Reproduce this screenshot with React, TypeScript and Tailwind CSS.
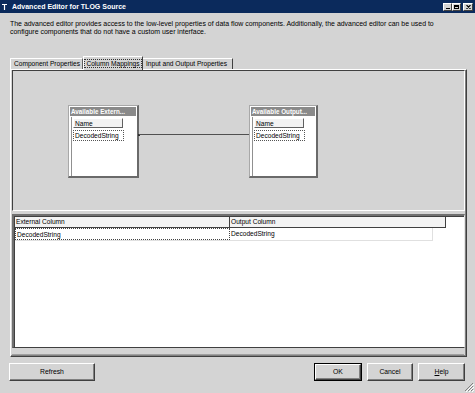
import React from 'react'

const ui = "font-['Liberation_Sans',Arial,sans-serif]"

const Btn = ({ label, w, primary, u }: { label: string; w: string; primary?: boolean; u?: boolean }) => (
  <div className={`${w} h-[18px] ${primary ? 'border border-black' : ''}`}>
    <div className="w-full h-full flex items-center justify-center border-t border-l border-white border-r border-b border-r-[#404040] border-b-[#404040] shadow-[inset_-1px_-1px_0_#808080] text-[6.8px]">
      {u ? (<span><span className="underline">H</span>elp</span>) : label}
    </div>
  </div>
)

const MapBox = ({ title, left, w }: { title: string; left: string; w: string }) => (
  <div className={`absolute top-[34px] ${left} ${w} h-[73px] bg-white border-t border-l border-[#a8a8a8] border-r-2 border-b-2 border-r-[#6a6a6a] border-b-[#6a6a6a] flex flex-col`}>
    <div className="mx-[1px] mt-[1px] h-[9px] bg-[#8a8a8a] text-white font-bold text-[6.3px] leading-[9px] pl-[1px] whitespace-nowrap overflow-hidden">
      {title}
    </div>
    <div className="flex-1 ml-[2px] mt-[1px] border-l border-[#909090] pl-[1px] pt-[1px]">
      <div className="w-[50px] h-[10px] bg-[#f2f2f2] border-r border-b border-[#606060] border-t border-l border-t-white border-l-white text-[6.6px] leading-[9px] pl-[1px]">
        Name
      </div>
      <div className="mt-[2px] w-[51px] h-[11px] border border-dotted border-[#555] text-[6.6px] leading-[9px] pl-[1px]">
        DecodedString
      </div>
    </div>
  </div>
)

export default function App() {
  return (
    <div className={`w-[475px] h-[393px] bg-[#d4d4d4] relative overflow-hidden text-black ${ui}`}>
      {/* title bar */}
      <div className="h-[13px] bg-[#0b2a5c] flex items-center pl-[2px] pr-[2px]">
        <svg width="5" height="6" viewBox="0 0 5 6" className="mr-[5px]">
          <path d="M0 0.5H5M2.5 0.5V6" stroke="white" strokeWidth="1.2" />
        </svg>
        <span className="text-white font-bold text-[7px] leading-[13px]">Advanced Editor for TLOG Source</span>
        <div className="ml-auto flex items-center">
          <div className="w-[9px] h-[8px] bg-[#d4d4d4] border-t border-l border-white border-r border-b border-r-[#404040] border-b-[#404040] flex items-end justify-center pb-[1px]">
            <div className="w-[4px] h-[1px] bg-black" />
          </div>
          <div className="w-[9px] h-[8px] bg-[#d4d4d4] border-t border-l border-white border-r border-b border-r-[#404040] border-b-[#404040] flex items-center justify-center">
            <div className="w-[5px] h-[4px] border border-black border-t-2" />
          </div>
          <div className="ml-[2px] w-[10px] h-[8px] bg-[#d4d4d4] border-t border-l border-white border-r border-b border-r-[#404040] border-b-[#404040] flex items-center justify-center">
            <svg width="5" height="4" viewBox="0 0 5 4">
              <path d="M0.5 0L4.5 4M4.5 0L0.5 4" stroke="black" strokeWidth="1.1" />
            </svg>
          </div>
        </div>
      </div>

      {/* description */}
      <div className="pl-[10px] pt-[7px] text-[6.95px] leading-[8px] h-[23px] whitespace-nowrap">
        <div>The advanced editor provides access to the low-level properties of data flow components. Additionally, the advanced editor can be used to</div>
        <div>configure components that do not have a custom user interface.</div>
      </div>

      {/* tabs */}
      <div className="mt-[20px] h-[13px] ml-[10px] flex items-end text-[6.6px] relative z-10">
        <div className="w-[73px] h-[11px] border-t border-l border-white border-r border-r-[#606060] flex items-center pl-[3px] rounded-tl-[1px]">
          Component Properties
        </div>
        <div className="w-[60px] h-[14px] -mb-[1px] bg-[#d4d4d4] border-t border-l border-white border-r border-r-[#404040] flex items-start justify-center pt-[2px]">
          <span className="border border-dotted border-[#333] px-[1px] leading-[7px]">Column Mappings</span>
        </div>
        <div className="w-[90px] h-[11px] border-t border-white border-r border-r-[#404040] flex items-center pl-[3px]">
          Input and Output Properties
        </div>
      </div>

      {/* tab page */}
      <div className="ml-[10px] w-[457px] h-[288px] border-t border-l border-white border-r border-b border-r-[#404040] border-b-[#404040] shadow-[inset_-1px_-1px_0_#808080] flex flex-col px-[1px]">
        <div className="relative h-[141px] border-t border-l border-[#404040] border-r border-b border-r-white border-b-white">
          <MapBox title="Available Extern..." left="left-[55px]" w="w-[71px]" />
          <div className="absolute top-[63px] left-[125px] w-[2px] h-[2px] bg-[#303030]" />
          <div className="absolute top-[63px] left-[126px] w-[110px] h-[1px] bg-[#505050]" />
          <MapBox title="Available Output..." left="left-[236px]" w="w-[69px]" />
        </div>
        <div className="h-[3px]" />
        <div className="h-[134px] bg-white border-t-2 border-l-2 border-t-[#707070] border-l-[#707070] border-r border-b border-r-[#e8e8e8] border-b-[#404040] shadow-[inset_1px_1px_0_#404040]">
          <div className="flex h-[11px] text-[6.6px] leading-[10px] mt-[1px] ml-[1px]">
            <div className="w-[215px] bg-[#f3f3f3] border-r border-b border-[#404040] pl-[1px]">External Column</div>
            <div className="w-[216px] bg-[#f3f3f3] border-r border-b border-[#404040] pl-[1px]">Output Column</div>
          </div>
          <div className="flex h-[13px] text-[6.6px] ml-[1px] w-[418px] border-b border-[#e0e0e0]">
            <div className="w-[215px] border border-dotted border-[#444] pl-[1px] leading-[11px]">DecodedString</div>
            <div className="flex-1 pl-[1px] leading-[12px] border-r border-[#e0e0e0]">DecodedString</div>
          </div>
        </div>
        <div className="mt-[6px] h-[1px] bg-[#a0a0a0] mr-[1px]" />
      </div>

      {/* buttons */}
      <div className="mt-[6px] flex items-start pl-[9px]">
        <Btn label="Refresh" w="w-[86px]" />
        <div className="ml-auto flex gap-[5px] pr-[10px]">
          <Btn label="OK" w="w-[48px]" primary />
          <Btn label="Cancel" w="w-[46px]" />
          <Btn label="Help" w="w-[47px]" u />
        </div>
      </div>

      {/* size grip */}
      <svg width="10" height="10" viewBox="0 0 10 10" className="absolute right-[1px] bottom-[1px]">
        <path d="M9 1L1 9M9 4L4 9M9 7L7 9" stroke="#808080" strokeWidth="1" />
        <path d="M10 2L2 10M10 5L5 10M10 8L8 10" stroke="#ffffff" strokeWidth="1" />
      </svg>
    </div>
  )
}
